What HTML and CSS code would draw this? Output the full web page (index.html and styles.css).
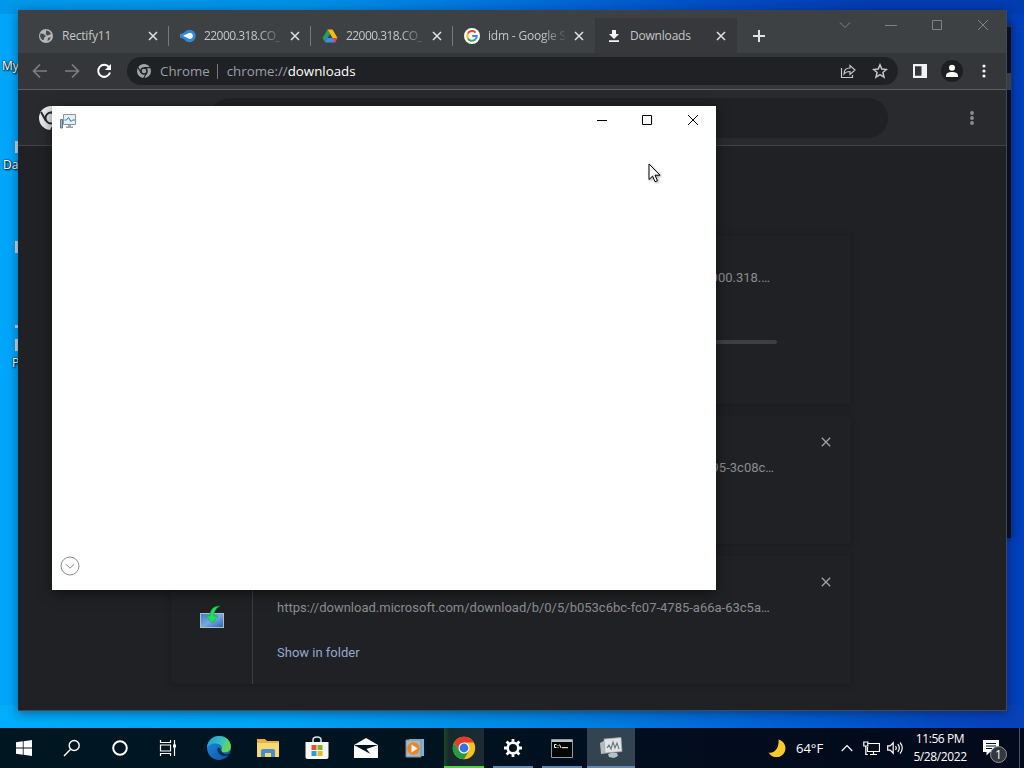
FILE: index.html
```html
<!DOCTYPE html>
<html lang="en">

<head>
    <meta charset="UTF-8" />
    <meta name="viewport" content="width=device-width, initial-scale=1.0" />
    <title>Desktop</title>
    <link rel="stylesheet" href="styles.css">
</head>

<body>
    <div class="desktop">

        <!-- Desktop icons, mostly hidden by the browser -->
        <span class="desk-label label-my">My</span>
        <span class="desk-label label-da">Da</span>
        <span class="desk-label label-p">P</span>
        <i class="desk-edge edge-1"></i>
        <i class="desk-edge edge-2"></i>
        <i class="desk-edge edge-3"></i>
        <i class="desk-edge edge-4"></i>

        <!-- Window behind the browser -->
        <div class="back-window"></div>

        <!-- Browser -->
        <div class="browser">
            <div class="tabstrip">
                <div class="tab">
                    <svg class="favicon" viewBox="0 0 16 16"><circle cx="8" cy="8" r="7" fill="#b4b6b8"/><path d="M2.500 5.500C5 5 6.500 6.500 8 8c-1 1.500-2 1-2 2.500 0 1-.5 1.500-1.500 1.500C2.500 10.500 1.500 8 2.500 5.500zM8 2.500c2 0 4 1 5 3.500-1 1-2.500.5-3 1.500C9 8 7 6 8 5zM10 10l2.500-1c0 2-1.500 3.500-3 4z" fill="#46494b"/></svg>
                    <span class="tab-title">Rectify11</span>
                    <svg class="tab-close" viewBox="0 0 10 10"><path d="M1 1l8 8M9 1L1 9"/></svg>
                </div>
                <div class="tab">
                    <svg class="favicon" viewBox="0 0 16 16"><circle cx="9.500" cy="8" r="6.200" fill="#3088d6"/><path d="M0 6l6-2v8L0 9.500z" fill="#3088d6"/><path d="M3 7.800l5.500-2.600a3 3 0 1 1 0 5.400z" fill="#fff"/></svg>
                    <span class="tab-title narrow">22000.318.CO_</span>
                    <svg class="tab-close" viewBox="0 0 10 10"><path d="M1 1l8 8M9 1L1 9"/></svg>
                </div>
                <div class="tab">
                    <svg class="favicon" viewBox="0 0 16 16"><path d="M5.500 1.500L8 6 3 14.300.6 10z" fill="#1ea362"/><path d="M5.500 1.500h5l5 8.500h-5z" fill="#fbbc04"/><path d="M5.300 10h10.200L13 14.400H3z" fill="#4285f4"/><path d="M10.500 10h5L13 14.400z" fill="#ea4335"/></svg>
                    <span class="tab-title narrow">22000.318.CO_</span>
                    <svg class="tab-close" viewBox="0 0 10 10"><path d="M1 1l8 8M9 1L1 9"/></svg>
                </div>
                <div class="tab no-line">
                    <svg class="favicon" viewBox="0 0 16 16"><circle cx="8" cy="8" r="8" fill="#fff"/><g fill="none" stroke-width="2"><path d="M11.600 4.600A4.800 4.800 0 0 0 3.900 5.500" stroke="#ea4335"/><path d="M3.900 5.500a5 5 0 0 0 0 5" stroke="#fbbc05"/><path d="M3.900 10.500a4.800 4.800 0 0 0 7.300 1.100" stroke="#34a853"/><path d="M11.200 11.600A4.600 4.600 0 0 0 12.800 8H8.200" stroke="#4285f4"/></g></svg>
                    <span class="tab-title">idm - Google S</span>
                    <svg class="tab-close" viewBox="0 0 10 10"><path d="M1 1l8 8M9 1L1 9"/></svg>
                </div>
                <div class="tab active">
                    <svg class="favicon" viewBox="0 0 16 16"><path d="M6 2h4v4h3L8 11 3 6h3zM3 12.300h10V14H3z" fill="#f1f3f4"/></svg>
                    <span class="tab-title">Downloads</span>
                    <svg class="tab-close" viewBox="0 0 10 10"><path d="M1 1l8 8M9 1L1 9"/></svg>
                </div>
                <svg class="new-tab" viewBox="0 0 12 12"><path d="M6 0v12M0 6h12"/></svg>
                <div class="caption-buttons">
                    <svg viewBox="0 0 12 12"><path d="M1 3.500l5 5 5-5"/></svg>
                    <svg viewBox="0 0 12 12"><path d="M0 6.500h12"/></svg>
                    <svg viewBox="0 0 12 12"><path d="M1.500 1.500h9v9h-9z"/></svg>
                    <svg viewBox="0 0 12 12"><path d="M1 1l10 10M11 1L1 11"/></svg>
                </div>
            </div>

            <div class="toolbar">
                <svg class="nav dim" viewBox="0 0 16 16"><path d="M15 8H2M8 1.500L1.500 8 8 14.500"/></svg>
                <svg class="nav dim" viewBox="0 0 16 16"><path d="M1 8h13M8 1.500L14.500 8 8 14.500"/></svg>
                <svg class="nav" viewBox="0 0 16 16"><path d="M13 4.200A6 6 0 1 0 14 9.500"/><path class="solid" d="M15 1v6H9z"/></svg>
                <div class="omnibox">
                    <svg class="chrome-mono" viewBox="0 0 16 16"><circle cx="8" cy="8" r="7" fill="#a2a5a8"/><circle cx="8" cy="8" r="3" fill="#a2a5a8" stroke="#202124" stroke-width="1.500"/><path d="M8 4.700h6.500M5.100 9.700L1.900 4.200M10.900 9.700L7.700 15" stroke="#202124" stroke-width="1.200"/></svg>
                    <span class="site">Chrome</span>
                    <span class="url">chrome://<b>downloads</b></span>
                    <svg class="omni-icon" viewBox="0 0 16 16"><path d="M1.500 5v9.500h11V12M4 11c0-4 2-6 6-6V2.500L15 7l-5 4.500V8.500c-3 0-4.500.5-6 2.500z"/></svg>
                    <svg class="omni-icon star" viewBox="0 0 16 16"><path d="M8 1.800l1.800 4.300 4.600.4-3.500 3 1.100 4.600L8 11.700l-4 2.400 1.100-4.600-3.500-3 4.600-.4z"/></svg>
                </div>
                <svg class="panel-icon" viewBox="0 0 14 14"><path d="M0 0h14v14H0zM2 2.200v9.600h6.500V2.200z" fill="#f1f3f4" fill-rule="evenodd"/></svg>
                <svg class="profile" viewBox="0 0 22 22"><circle cx="11" cy="11" r="11" fill="#1d1e21"/><circle cx="11" cy="7.800" r="3" fill="#fff"/><path d="M5 17v-1.500c0-2.500 3-3.500 6-3.500s6 1 6 3.500V17z" fill="#fff"/></svg>
                <svg class="dots" viewBox="0 0 4 14"><circle cx="2" cy="2" r="1.600"/><circle cx="2" cy="7" r="1.600"/><circle cx="2" cy="12" r="1.600"/></svg>
            </div>

            <div class="page-header">
                <svg class="page-logo" viewBox="0 0 24 24"><circle cx="12" cy="12" r="12" fill="#e8eaed"/><circle cx="12" cy="12" r="5.500" fill="#e8eaed" stroke="#292a2d" stroke-width="2"/><path d="M12 6.500h11M7 15L2 6M17 15l-5 9" stroke="#292a2d" stroke-width="2"/></svg>
                <div class="search"></div>
                <svg class="dots page-dots" viewBox="0 0 4 14"><circle cx="2" cy="2" r="1.900"/><circle cx="2" cy="7" r="1.900"/><circle cx="2" cy="12" r="1.900"/></svg>
            </div>

            <div class="downloads">
                <div class="item tall">
                    <div class="item-icon"></div>
                    <div class="item-body">
                        <p class="link end-1">22000.318.…</p>
                        <div class="progress"></div>
                    </div>
                </div>
                <div class="item">
                    <div class="item-icon"></div>
                    <div class="item-body">
                        <p class="link end-2">95-3c08c…</p>
                    </div>
                    <svg class="remove" viewBox="0 0 10 10"><path d="M.8.8l8.400 8.400M9.200.8L.8 9.200"/></svg>
                </div>
                <div class="item">
                    <div class="item-icon">
                        <svg viewBox="0 0 26 26">
                            <defs><linearGradient id="scr" x1="0" y1="0" x2="1" y2="1"><stop offset="0" stop-color="#3f78c4"/><stop offset=".5" stop-color="#78a8e0"/><stop offset="1" stop-color="#2a62ac"/></linearGradient></defs>
                            <rect x="1.500" y="9.500" width="23" height="14" fill="url(#scr)" stroke="#a9bfcb"/>
                            <path d="M21 2c-7 0-10 4-10 10H7l6.500 7L19 12h-4c0-5 2-8 6-10z" fill="#1ee05a" stroke="#0a9c38" stroke-width=".5"/>
                        </svg>
                    </div>
                    <div class="item-body">
                        <p class="link">https://download.microsoft.com/download/b/0/5/b053c6bc-fc07-4785-a66a-63c5a…</p>
                        <p class="show">Show in folder</p>
                    </div>
                    <svg class="remove" viewBox="0 0 10 10"><path d="M.8.8l8.400 8.400M9.200.8L.8 9.200"/></svg>
                </div>
            </div>
        </div>

        <!-- Task manager, still loading -->
        <div class="dialog">
            <div class="dialog-bar">
                <svg class="dialog-icon" viewBox="0 0 16 16"><path d="M3.500.5h12v10h-12z" fill="#e3f2fb" stroke="#8b969e"/><path d="M4.500 6h2l2-2.500 2.500 4L12.500 6H15" fill="none" stroke="#2e79b5"/><path d="M.5 5.500h2v8.500h-2z" fill="#9fb0bd" stroke="#6d7880"/><path d="M8 11h3v1.500h2V14H6v-1.500h2z" fill="#9aa3aa"/></svg>
                <div class="dialog-buttons">
                    <svg viewBox="0 0 12 12"><path d="M1 6.500h10"/></svg>
                    <svg viewBox="0 0 12 12"><path d="M1.500 1.500h9v9h-9z"/></svg>
                    <svg viewBox="0 0 12 12"><path d="M1 1l10 10M11 1L1 11"/></svg>
                </div>
            </div>
            <svg class="more" viewBox="0 0 20 20"><circle cx="10" cy="10" r="9"/><path d="M5.800 8.200L10 12.200l4.200-4"/></svg>
        </div>

        <svg class="cursor" viewBox="0 0 13 20"><path d="M1 1v15.500l3.600-3.400 2.400 5.600 2.400-1-2.400-5.500h5z" fill="#fff" stroke="#000"/></svg>

        <!-- Taskbar -->
        <div class="taskbar">
            <div class="task"><svg viewBox="0 0 16 16" width="16" height="16"><path d="M0 2.200L6.800 1.300v6.200H0zM7.600 1.200L16 0v7.500H7.600zM0 8.400h6.800v6.300L0 13.800zM7.600 8.400H16V16l-8.400-1.200z" fill="#fff"/></svg></div>
            <div class="task"><svg viewBox="0 0 18 18" width="18" height="18"><g fill="none" stroke="#fff" stroke-width="1.400"><circle cx="11.200" cy="6.500" r="5"/><path d="M7.600 10.200L1 17"/></g></svg></div>
            <div class="task"><svg viewBox="0 0 18 18" width="18" height="18"><circle cx="9" cy="9" r="6.800" fill="none" stroke="#fff" stroke-width="2"/></svg></div>
            <div class="task"><svg viewBox="0 0 18 18" width="18" height="18"><path d="M1.500 1v2.500h10V1M1.500 17v-2.500h10V17M1.500 6h10v6h-10zM15.500 1v16" fill="none" stroke="#fff" stroke-width="1.200"/><path d="M14 5.500h3v3h-3z" fill="#fff"/></svg></div>
            <div class="task app">
                <svg viewBox="0 0 24 24" width="26" height="26">
                    <defs>
                        <linearGradient id="edgeTop" x1="0" y1="0" x2="1" y2=".4"><stop offset="0" stop-color="#1c9be0"/><stop offset=".6" stop-color="#35bfc3"/><stop offset="1" stop-color="#64d94e"/></linearGradient>
                        <linearGradient id="edgeLow" x1="0" y1="0" x2="1" y2="1"><stop offset="0" stop-color="#1d8ee0"/><stop offset="1" stop-color="#0c4f9e"/></linearGradient>
                    </defs>
                    <circle cx="12" cy="12" r="11" fill="url(#edgeLow)"/>
                    <path d="M1.200 10C2 5 6.500 1 12 1c6.500 0 11 4.500 11 9.500 0 3.500-2.500 5.500-5.500 5.500-2.500 0-3.700-1-3.200-2 1.200-2 .2-5.500-3.800-6C6 7.500 2 9 1.200 12z" fill="url(#edgeTop)"/>
                    <path d="M14 14.500c1 3 5 4 8 2.500-.5 1-1 1.500-1.600 2-4 1.200-8.400 0-9.900-5-.3-1.500.5-2.500 1.500-2.500 1.500 1 1.500 2 2 3z" fill="#082d55"/>
                </svg>
            </div>
            <div class="task app"><svg viewBox="0 0 22 18" width="22" height="18"><path d="M0 0h8l2 2h12v16H0z" fill="#e8b03c"/><path d="M0 4h22v14H0z" fill="#f8d775"/><path d="M4 18v-6q0-2 2-2h10q2 0 2 2v6h-4v-4H8v4z" fill="#4a8fc4"/></svg></div>
            <div class="task app"><svg viewBox="0 0 24 24" width="24" height="24"><path d="M8 7V4q0-3 4-3t4 3v3" fill="none" stroke="#dfe5e8" stroke-width="1.500"/><path d="M.5 6h23v15q0 2-2 2h-19q-2 0-2-2z" fill="#f7f7f7"/><path d="M6.500 9h5v5h-5z" fill="#e8502b"/><path d="M12.500 9h5v5h-5z" fill="#7cb62a"/><path d="M6.500 15h5v5h-5z" fill="#23a0dc"/><path d="M12.500 15h5v5h-5z" fill="#f5b51c"/></svg></div>
            <div class="task app"><svg viewBox="0 0 24 20" width="24" height="20"><path d="M0 7L12 0l12 7v13H0z" fill="#fff"/><path d="M0 7h24L12.500 11l4 5L0 7z" fill="#04141f"/></svg></div>
            <div class="task app"><svg viewBox="0 0 20 20" width="20" height="20"><path d="M4 1h15v17H4z" fill="#7bb7d6"/><path d="M1 2h15v17H1z" fill="#a7b9c4" stroke="#78909c"/><circle cx="8.500" cy="10.500" r="6.200" fill="#f08228"/><path d="M6.500 6.500l6 4-6 4z" fill="#fff"/></svg></div>
            <div class="task app open chrome">
                <svg viewBox="0 0 24 24" width="24" height="24"><circle cx="12" cy="12" r="11.200" fill="#fbc116"/><path d="M2.300 6.400A11.200 11.200 0 0 1 21.700 6.400L12 6.600 7.100 14.800z" fill="#e33b2e"/><path d="M2.300 6.400A11.200 11.200 0 0 0 12 23.200L16.900 14.800 12 17.500 7.100 14.800z" fill="#229a48"/><circle cx="12" cy="12" r="5.500" fill="#fff"/><circle cx="12" cy="12" r="4.400" fill="#3572e0"/></svg>
            </div>
            <div class="task app open"><svg viewBox="0 0 20 20" width="20" height="20"><circle cx="10" cy="10" r="5.300" fill="none" stroke="#fff" stroke-width="2.600"/><path d="M10 1v3.500M10 15.500V19M1 10h3.500M15.500 10H19M3.600 3.600l2.500 2.500M13.900 13.900l2.500 2.500M16.400 3.600l-2.500 2.500M6.100 13.900l-2.500 2.500" stroke="#fff" stroke-width="2.800"/></svg></div>
            <div class="task app open"><svg viewBox="0 0 22 19" width="22" height="19"><path d="M.5.5h21v18H.5z" fill="#050505" stroke="#8f9ba0"/><path d="M1 1h20v2H1z" fill="#b9c2c6"/><path d="M5.500 5.500h-2v3h2M7 6v.8M7 8v.8M8.500 5.500l1.500 3.500M11 8.700h6" fill="none" stroke="#fff"/></svg></div>
            <div class="task app open current"><svg viewBox="0 0 24 22" width="24" height="22"><path d="M1 6l7-4 1 14-7 1z" fill="#b4bcc0"/><path d="M5 2l17-1.500 1 14L6 16z" fill="#dfe3e4" stroke="#9da7ac" stroke-width=".7"/><path d="M8 11l2-3 2 4 2-7 2 6 2-5 2 6" fill="none" stroke="#66747b" stroke-width="1.100"/><path d="M9 17l4-1.500 5 .5 1 3-4 2-5-1z" fill="#b8c0c3"/></svg></div>

            <div class="tray">
                <svg class="moon" viewBox="0 0 18 18"><path d="M10.500.5a9 9 0 1 1-10 13c5 1.500 11-3.500 10-13z" fill="#fbc92e"/></svg>
                <span class="temp">64°F</span>
                <svg class="chevron" viewBox="0 0 12 8"><path d="M.7 7L6 1.500 11.300 7"/></svg>
                <svg class="net" viewBox="0 0 17 15"><path d="M5 2.500h11.500v8H4.500V6M7 13.500h7M10.500 10.500v3M.8 1h4v4h-4zM2.800 5v8.500h2"/></svg>
                <svg class="vol" viewBox="0 0 17 14"><path d="M.7 4.800h2.500l3-3v10.400l-3-3H.7zM8.500 5q1.500 2 0 4M10.800 3.200q3 3.800 0 7.600M13 1.500q4.500 5.500 0 11"/></svg>
                <div class="clock">
                    <span>11:56 PM</span>
                    <span>5/28/2022</span>
                </div>
                <div class="notify">
                    <svg viewBox="0 0 16 16"><path d="M0 0h16v12H7l-3.500 3.500V12H0z" fill="#fff"/><path d="M3 3.500h10M3 6h10M3 8.500h6" stroke="#04101f"/></svg>
                    <span class="badge">1</span>
                </div>
            </div>
        </div>
    </div>
</body>

</html>
```

FILE: styles.css
```css
/* General */
* {
    box-sizing: border-box;
}

body {
    margin: 0;
    font-family: "Open Sans", "Noto Sans", sans-serif;
    font-size: 12px;
}

p {
    margin: 0;
}

svg {
    display: block;
    flex: none;
}

.desktop {
    position: relative;
    width: 1024px;
    height: 768px;
    overflow: hidden;
    background:
        linear-gradient(90deg, #00adfa 0%, #00a4f4 28%, #0088e4 52%, #0062d4 75%, #0648c0 92%, #0840b8 100%) 0 705px / 100% 23px no-repeat,
        linear-gradient(90deg, #0098ec 0%, #0092e8 30%, #0070dc 50%, #0050c8 68%, #003cb2 85%) 0 0 / 100% 14px no-repeat,
        linear-gradient(90deg, #00a6fa 0%, #00a6fa 50%, #003cb4 51%, #0040bc 100%);
}

/* Desktop icons */
.desk-label {
    position: absolute;
    color: #fff;
    line-height: 16px;
    text-shadow: 1px 1px 2px #000, 0 0 2px #000;
}

.label-my { left: 2px; top: 58px; }
.label-da { left: 3px; top: 157px; }
.label-p { left: 12px; top: 355px; }

.desk-edge {
    position: absolute;
    left: 15px;
    width: 3px;
    height: 12px;
    background: #c9dce8;
}

.edge-1 { top: 141px; }
.edge-2 { top: 241px; }
.edge-3 { top: 325px; height: 3px; }
.edge-4 { top: 339px; }

.back-window {
    position: absolute;
    left: 900px;
    top: 25px;
    width: 112px;
    height: 513px;
    background: linear-gradient(#34373a 0, #34373a 2px, #0e1124 2px, #0e1124 48px, #45484c 48px, #45484c 65px, #0c1022 65px);
    border-right: 1px solid #123a82;
    box-shadow: 0 0 8px rgba(0, 0, 40, 0.4);
}

/* Browser window */
.browser {
    position: absolute;
    left: 18px;
    top: 10px;
    width: 989px;
    height: 701px;
    display: flex;
    flex-direction: column;
    background: #202124;
    border: solid #46494c;
    border-width: 0 1px 1px 0;
    box-shadow: 0 2px 10px rgba(0, 10, 40, 0.45);
}

.tabstrip {
    display: flex;
    align-items: flex-end;
    height: 43px;
    padding-left: 9px;
    background: #3e4143;
}

.tab {
    position: relative;
    display: flex;
    align-items: center;
    width: 142px;
    height: 35px;
    padding: 0 11px;
    color: #c4c7c9;
}

.tab::after {
    content: "";
    position: absolute;
    right: 0;
    top: 8px;
    width: 1px;
    height: 20px;
    background: #777a7d;
}

.no-line::after,
.active::after {
    display: none;
}

.active {
    background: #37383c;
}

.favicon {
    width: 16px;
    height: 16px;
    margin-right: 8px;
}

.tab-title {
    width: 77px;
    margin-right: 9px;
    white-space: nowrap;
    letter-spacing: -0.2px;
    -webkit-mask-image: linear-gradient(90deg, #000 54px, transparent 80px);
}

.narrow {
    letter-spacing: -0.55px;
}

.tab:first-child .tab-title,
.active .tab-title {
    -webkit-mask-image: none;
}

.tab-close {
    width: 10px;
    height: 10px;
    stroke: #dcdfe1;
    stroke-width: 1.6;
}

.new-tab {
    width: 12px;
    height: 12px;
    margin: 0 0 11px 16px;
    stroke: #e0e2e4;
    stroke-width: 2;
}

.caption-buttons {
    display: flex;
    align-self: flex-start;
    gap: 34px;
    margin: 9px 17px 0 auto;
}

.caption-buttons svg {
    width: 12px;
    height: 12px;
    fill: none;
    stroke: #808385;
}

/* Toolbar */
.toolbar {
    display: flex;
    align-items: center;
    height: 37px;
    padding: 0 20px 0 14px;
    background: #35363a;
    border-bottom: 1px solid #5d5f62;
}

.nav {
    width: 16px;
    height: 16px;
    margin-right: 16px;
    fill: none;
    stroke: #fff;
    stroke-width: 2;
}

.nav .solid {
    fill: #fff;
    stroke: none;
}

.dim {
    stroke: #7c7f82;
    stroke-width: 1.7;
}

.omnibox {
    display: flex;
    align-items: center;
    width: 771px;
    height: 28px;
    margin: 0 15px 0 -1px;
    padding: 0 10px 0 9px;
    border-radius: 14px;
    background: #202124;
    font-size: 13.3px;
    color: #9aa0a6;
}

.chrome-mono {
    width: 16px;
    height: 16px;
    margin-right: 8px;
}

.site {
    padding-right: 7px;
    line-height: 15px;
    border-right: 1px solid #77797c;
}

.url {
    margin: 0 auto 0 9px;
}

.url b {
    font-weight: normal;
    color: #fff;
}

.omni-icon {
    width: 16px;
    height: 16px;
    fill: none;
    stroke: #c4c7c9;
    stroke-width: 1.2;
}

.star {
    margin-left: 16px;
    stroke-width: 1.5;
}

.panel-icon {
    width: 14px;
    height: 14px;
    margin-right: 14px;
}

.profile {
    width: 22px;
    height: 22px;
}

.dots {
    width: 4px;
    height: 14px;
    margin-left: auto;
    fill: #f1f3f4;
}

/* Downloads page */
.page-header {
    display: flex;
    align-items: center;
    height: 56px;
    padding: 0 32px 0 21px;
    background: #292a2d;
    border-bottom: 1px solid #414346;
}

.page-logo {
    width: 24px;
    height: 24px;
}

.search {
    width: 678px;
    height: 40px;
    margin-left: 147px;
    border-radius: 20px;
    background: #202124;
}

.page-dots {
    fill: #8b8d90;
}

.downloads {
    display: flex;
    flex-direction: column;
    gap: 12px;
    width: 680px;
    margin: 90px 0 0 153px;
    font-family: Roboto, sans-serif;
    font-size: 13px;
}

.item {
    position: relative;
    display: flex;
    height: 128px;
    background: #202124;
    border-radius: 4px;
    box-shadow: 0 1px 6px 1px rgba(0, 0, 0, 0.17);
}

.tall {
    height: 168px;
}

.item-icon {
    width: 82px;
    padding: 48px 0 0 28px;
    border-right: 1px solid #3c3d40;
}

.item-icon svg {
    width: 26px;
    height: 26px;
}

.item-body {
    width: 524px;
    padding: 44px 0 0 24px;
}

.tall .item-body {
    padding-top: 34px;
}

.link {
    line-height: 16px;
    color: #898d90;
    white-space: nowrap;
}

.end-1 {
    width: 493px;
    text-align: right;
}

.end-2 {
    width: 497px;
    text-align: right;
}

.progress {
    height: 4px;
    margin-top: 54px;
    border-radius: 2px;
    background: #3d3f42;
}

.show {
    margin-top: 29px;
    line-height: 16px;
    color: #95a8d0;
}

.remove {
    width: 10px;
    height: 10px;
    margin: 21px 20px 0 auto;
    stroke: #a0a3a6;
    stroke-width: 1.3;
}

/* White window */
.dialog {
    position: absolute;
    left: 52px;
    top: 106px;
    width: 664px;
    height: 484px;
    display: flex;
    flex-direction: column;
    justify-content: space-between;
    background: #fff;
    box-shadow: 0 3px 12px rgba(0, 0, 0, 0.5);
}

.dialog-bar {
    display: flex;
    justify-content: space-between;
    padding: 8px 17px 0 8px;
}

.dialog-icon {
    width: 16px;
    height: 16px;
}

.dialog-buttons {
    display: flex;
}

.dialog-buttons svg {
    width: 12px;
    height: 12px;
    margin-left: 33px;
    fill: none;
    stroke: #000;
}

.dialog-buttons svg:last-child {
    margin-left: 34px;
}

.more {
    width: 20px;
    height: 20px;
    margin: 0 0 14px 7.5px;
    fill: none;
    stroke: #8c8c8c;
}

.cursor {
    position: absolute;
    left: 648px;
    top: 163px;
    width: 13px;
    height: 20px;
    filter: drop-shadow(1px 1px 1px rgba(0, 0, 0, 0.4));
}

/* Taskbar */
.taskbar {
    position: absolute;
    left: 0;
    top: 728px;
    width: 1024px;
    height: 40px;
    display: flex;
    background: linear-gradient(90deg, #001722 0%, #001420 40%, #020c1c 70%, #020a1c 100%);
}

.task {
    position: relative;
    display: flex;
    align-items: center;
    justify-content: center;
    width: 48px;
    height: 40px;
}

.app {
    margin-right: 1px;
}

.task:nth-child(5) {
    margin-left: 3px;
}

.open::after {
    content: "";
    position: absolute;
    left: 4px;
    right: 4px;
    bottom: 0;
    height: 2px;
    background: #5f87b0;
}

.chrome {
    background: linear-gradient(90deg, transparent 4px, #154a26 4px, #152a2c 9px, #1e2a35 44px, transparent 44px);
}

.chrome::after {
    background: #4fd63a;
}

.current {
    background: #33434f;
}

.current::after {
    left: 0;
    right: 0;
}

/* Tray */
.tray {
    display: flex;
    align-items: center;
    width: 252px;
    margin: 0 4px 0 auto;
    color: #fff;
    border-right: 1px solid #44506a;
}

.moon {
    width: 18px;
    height: 18px;
    margin-right: 10px;
}

.temp {
    width: 45px;
    font-size: 13px;
}

.chevron,
.net,
.vol {
    fill: none;
    stroke: #fff;
    stroke-width: 1.2;
}

.chevron {
    width: 12px;
    height: 8px;
    margin-right: 10px;
}

.net {
    width: 17px;
    height: 15px;
    margin-right: 7px;
}

.vol {
    width: 17px;
    height: 14px;
}

.clock {
    display: flex;
    flex-direction: column;
    align-items: center;
    width: 72px;
    line-height: 18px;
    letter-spacing: -0.4px;
}

.notify {
    position: relative;
    margin-left: 7px;
}

.notify svg {
    width: 16px;
    height: 16px;
}

.badge {
    position: absolute;
    left: 7px;
    top: 6px;
    width: 17px;
    height: 17px;
    border: 1px solid #8d949c;
    border-radius: 50%;
    background: #303840;
    font-size: 12px;
    line-height: 15px;
    text-align: center;
}
```
